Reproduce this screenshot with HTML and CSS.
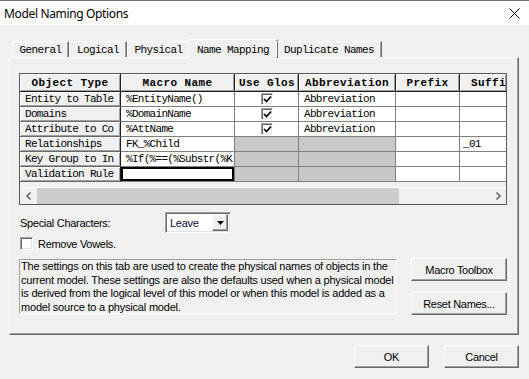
FILE: index.html
```html
<!DOCTYPE html>
<html lang="en">
<head>
  <meta charset="UTF-8" />
  <title>Model Naming Options</title>
  <link rel="stylesheet" href="styles.css">
</head>
<body>
  <div class="window">
    <div class="titlebar">
      <span class="title">Model Naming Options</span>
      <svg class="close" width="11" height="11" viewBox="0 0 11 11">
        <path d="M0.5 0.5 L10.5 10.5 M10.5 0.5 L0.5 10.5" stroke="#000" stroke-width="1" fill="none" />
      </svg>
    </div>

    <div class="client">
      <div class="tabs">
        <div class="tab t-general">General</div>
        <div class="tab t-logical">Logical</div>
        <div class="tab t-physical">Physical</div>
        <div class="tab t-mapping active">Name Mapping</div>
        <div class="tab t-dup">Duplicate Names</div>
      </div>

      <div class="panel">
        <div class="grid">
          <table>
            <colgroup>
              <col class="c-type">
              <col class="c-macro">
              <col class="c-glos">
              <col class="c-abbr">
              <col class="c-prefix">
              <col class="c-suffix">
            </colgroup>
            <tr>
              <th>Object Type</th>
              <th>Macro Name</th>
              <th class="left">Use Glos</th>
              <th>Abbreviation</th>
              <th>Prefix</th>
              <th class="left suffix">Suffi</th>
            </tr>
            <tr>
              <td class="rh">Entity to Table</td>
              <td>%EntityName()</td>
              <td class="ck"><span class="cb"><svg width="9" height="9" viewBox="0 0 9 9"><path d="M1 4 L3.5 6.5 L8 1.5" stroke="#000" stroke-width="1.7" fill="none" /></svg></span></td>
              <td>Abbreviation</td>
              <td></td>
              <td></td>
            </tr>
            <tr>
              <td class="rh">Domains</td>
              <td>%DomainName</td>
              <td class="ck"><span class="cb"><svg width="9" height="9" viewBox="0 0 9 9"><path d="M1 4 L3.5 6.5 L8 1.5" stroke="#000" stroke-width="1.7" fill="none" /></svg></span></td>
              <td>Abbreviation</td>
              <td></td>
              <td></td>
            </tr>
            <tr>
              <td class="rh">Attribute to Co</td>
              <td>%AttName</td>
              <td class="ck"><span class="cb"><svg width="9" height="9" viewBox="0 0 9 9"><path d="M1 4 L3.5 6.5 L8 1.5" stroke="#000" stroke-width="1.7" fill="none" /></svg></span></td>
              <td>Abbreviation</td>
              <td></td>
              <td></td>
            </tr>
            <tr>
              <td class="rh">Relationships</td>
              <td>FK_%Child</td>
              <td class="dis"></td>
              <td class="dis"></td>
              <td></td>
              <td class="sfx">_01</td>
            </tr>
            <tr>
              <td class="rh">Key Group to In</td>
              <td>%If(%==(%Substr(%K</td>
              <td class="dis"></td>
              <td class="dis"></td>
              <td></td>
              <td></td>
            </tr>
            <tr>
              <td class="rh">Validation Rule</td>
              <td class="sel"></td>
              <td class="dis"></td>
              <td class="dis"></td>
              <td></td>
              <td></td>
            </tr>
          </table>
          <div class="grid-empty"></div>
          <div class="hscroll">
            <div class="sarrow">
              <svg width="8" height="8" viewBox="0 0 8 8"><path d="M5.5 0.5 L2 4 L5.5 7.5" stroke="#606060" stroke-width="1.5" fill="none" /></svg>
            </div>
            <div class="thumb"></div>
            <div class="track"></div>
            <div class="sarrow">
              <svg width="8" height="8" viewBox="0 0 8 8"><path d="M2.5 0.5 L6 4 L2.5 7.5" stroke="#606060" stroke-width="1.5" fill="none" /></svg>
            </div>
          </div>
        </div>

        <div class="special">
          <span class="label">Special Characters:</span>
          <div class="combo">
            <span class="combo-value">Leave</span>
            <div class="drop">
              <svg width="7" height="4" viewBox="0 0 7 4"><path d="M0 0 H7 L3.5 4 Z" fill="#000" /></svg>
            </div>
          </div>
        </div>

        <div class="check-row">
          <span class="cb"></span>
          <span>Remove Vowels.</span>
        </div>

        <div class="info-row">
          <div class="info">
            The settings on this tab are used to create the physical names of objects in the<br>
            current model. These settings are also the defaults used when a physical model<br>
            is derived from the logical level of this model or when this model is added as a<br>
            model source to a physical model.
          </div>
          <div class="side-buttons">
            <button class="btn wide">Macro Toolbox</button>
            <button class="btn wide">Reset Names...</button>
          </div>
        </div>
      </div>

      <div class="footer">
        <button class="btn">OK</button>
        <button class="btn">Cancel</button>
      </div>
    </div>
  </div>
</body>
</html>
```

FILE: styles.css
```css
* {
  box-sizing: border-box;
}

body {
  margin: 0;
  background: #f0f0f0;
  font-family: "Liberation Sans", Arial, sans-serif;
  font-size: 11px;
  letter-spacing: -0.3px;
  color: #000;
}

.window {
  width: 529px;
  height: 379px;
  background: #f0f0f0;
  overflow: hidden;
}

/* title bar */
.titlebar {
  height: 25px;
  background: #fff;
  border-top: 1px solid #707070;
  display: flex;
  align-items: center;
  justify-content: space-between;
  padding: 0 9px 0 4px;
}

.title {
  font-family: "Noto Sans", sans-serif;
  font-size: 12px;
  letter-spacing: -0.35px;
}

.close {
  display: block;
}

.client {
  padding: 14px 10px 0 9px;
}

/* tabs */
.tabs {
  display: flex;
  align-items: flex-end;
  height: 18px;
  margin-left: 3px;
  position: relative;
  z-index: 1;
}

.tab {
  height: 16px;
  padding: 0;
  border: 1px solid;
  border-bottom: none;
  border-color: #fff #696969 transparent #fff;
  box-shadow: inset -1px 0 #a0a0a0;
  font-family: "Liberation Mono", monospace;
  font-size: 11px;
  letter-spacing: -0.6px;
  line-height: 16px;
  text-align: center;
  white-space: nowrap;
}

.t-general { width: 57px; }
.t-logical { width: 58px; }
.t-physical { width: 63px; }
.t-dup { width: 106px; }

.tab.active {
  width: 90px;
  height: 19px;
  margin: 0 -2px -1px;
  background: #f0f0f0;
  line-height: 20px;
}

/* panel */
.panel {
  height: 278px;
  border: 1px solid;
  border-color: #fff #696969 #696969 #fff;
  box-shadow: inset -1px -1px #a0a0a0;
  padding: 15px 0 0 9px;
}

.grid {
  width: 488px;
  border: 1px solid #5a5a5a;
  background: #f0f0f0;
}

table {
  width: 486px;
  table-layout: fixed;
  border-collapse: separate;
  border-spacing: 0;
  font-family: "Liberation Mono", monospace;
  font-size: 11px;
  letter-spacing: -0.7px;
}

col.c-type { width: 101px; }
col.c-macro { width: 114px; }
col.c-glos { width: 64px; }
col.c-abbr { width: 97px; }
col.c-prefix { width: 64px; }
col.c-suffix { width: 46px; }

th {
  height: 18px;
  padding: 0;
  background: #f0f0f0;
  border-right: 1px solid #1e1e1e;
  border-bottom: 1px solid #1e1e1e;
  box-shadow: inset 1px 1px #fff, inset -1px -1px #a0a0a0;
  font-weight: bold;
  letter-spacing: 0.4px;
  text-align: center;
  white-space: nowrap;
  overflow: hidden;
  line-height: 16px;
}

th.left {
  text-align: left;
  padding-left: 4px;
}

th.suffix {
  padding-left: 11px;
  border-right: none;
}

td {
  height: 15px;
  padding: 0 0 0 5px;
  background: #fff;
  border-right: 1px solid #808080;
  border-bottom: 1px solid #808080;
  white-space: nowrap;
  overflow: hidden;
  line-height: 14px;
}

td:last-child {
  border-right: none;
}

td.rh {
  background: #f0f0f0;
  border-right-color: #1e1e1e;
  border-bottom-color: #696969;
  box-shadow: inset 1px 1px #fff, inset -1px -1px #a0a0a0;
}

td.dis {
  background: #c8c8c8;
}

td.sel {
  box-shadow: inset 0 0 0 2px #000;
}

td.sfx {
  padding-left: 3px;
}

td.ck {
  padding: 0;
  text-align: center;
}

.cb {
  display: inline-block;
  width: 12px;
  height: 12px;
  background: #fff;
  border: 1px solid;
  border-color: #a0a0a0 #fff #fff #a0a0a0;
  box-shadow: inset 1px 1px #696969, inset -1px -1px #e3e3e3;
  vertical-align: middle;
  position: relative;
}

.cb svg {
  position: absolute;
  left: 1px;
  top: 1px;
}

.grid-empty {
  height: 5px;
}

.hscroll {
  height: 17px;
  display: flex;
  border-top: 1px solid #fff;
  background: #f0f0f0;
}

.sarrow {
  width: 17px;
  display: flex;
  align-items: center;
  justify-content: center;
}

.thumb {
  width: 362px;
  background: #cdcdcd;
}

.track {
  flex: 1;
}

/* options */
.special {
  display: flex;
  align-items: center;
  margin-top: 7px;
}

.label {
  width: 146px;
  padding-left: 1px;
}

.combo {
  width: 66px;
  height: 21px;
  display: flex;
  align-items: center;
  background: #fff;
  border: 1px solid;
  border-color: #a0a0a0 #fff #fff #a0a0a0;
  box-shadow: inset 1px 1px #696969, inset -1px -1px #e3e3e3;
  padding: 2px;
}

.combo-value {
  flex: 1;
  padding-left: 2px;
  color: #0c0c3c;
}

.drop {
  width: 16px;
  height: 17px;
  display: flex;
  align-items: center;
  justify-content: center;
  background: #f0f0f0;
  border: 1px solid;
  border-color: #fff #696969 #696969 #fff;
  box-shadow: inset -1px -1px #a0a0a0;
}

.check-row {
  display: flex;
  align-items: center;
  gap: 5px;
  margin-top: 4px;
  padding-left: 1px;
}

.check-row .cb {
  width: 13px;
  height: 13px;
}

.info-row {
  display: flex;
  align-items: flex-start;
  gap: 14px;
  margin-top: 9px;
}

.info {
  width: 378px;
  height: 55px;
  border: 1px solid;
  border-color: #a0a0a0 #fff #fff #a0a0a0;
  padding: 0 1px;
  line-height: 13.5px;
  letter-spacing: -0.2px;
  white-space: nowrap;
  overflow: hidden;
}

.side-buttons {
  display: flex;
  flex-direction: column;
  gap: 11px;
  margin-top: -1px;
}

.btn {
  width: 75px;
  height: 23px;
  margin: 0;
  padding: 0;
  background: #f0f0f0;
  border: 1px solid;
  border-color: #fff #696969 #696969 #fff;
  box-shadow: inset -1px -1px #a0a0a0;
  font-family: "Liberation Sans", Arial, sans-serif;
  font-size: 11px;
  letter-spacing: -0.3px;
  color: #000;
}

.btn.wide {
  width: 96px;
}

.footer {
  display: flex;
  justify-content: flex-end;
  gap: 15px;
  padding-top: 10px;
}
```
